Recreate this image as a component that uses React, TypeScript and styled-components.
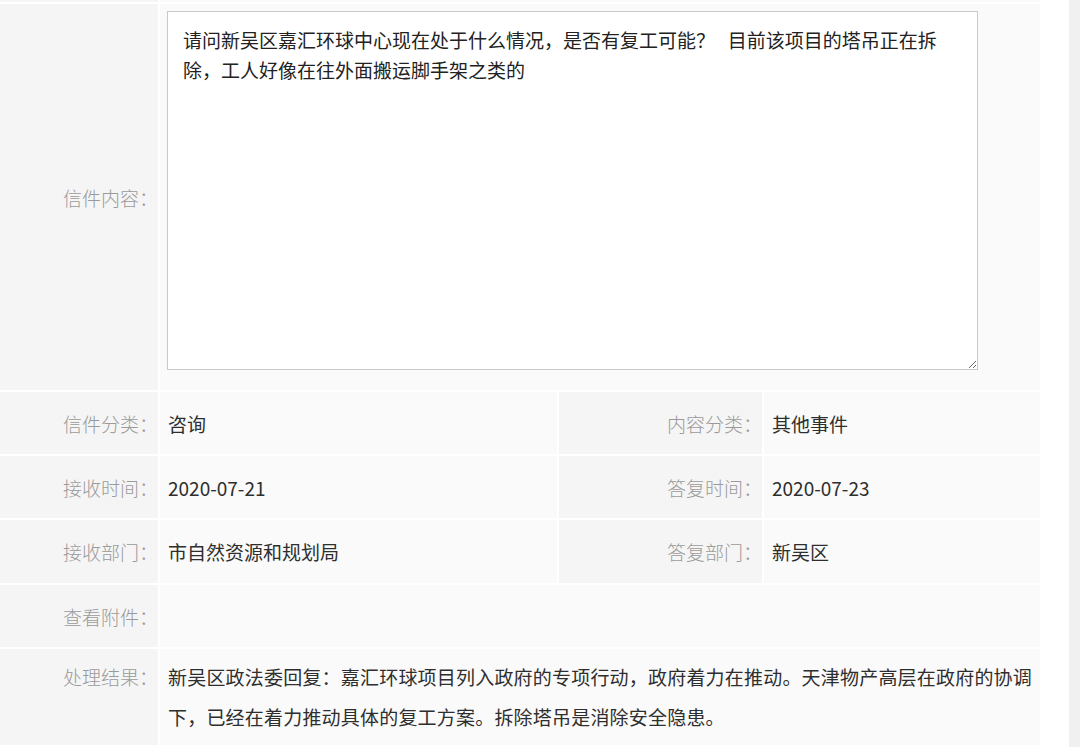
import React from "react";
import styled, { createGlobalStyle } from "styled-components";

const GlobalStyle = createGlobalStyle`
  html, body {
    margin: 0;
    padding: 0;
    background: #ffffff;
    font-family: "Noto Sans CJK SC", "Noto Sans", sans-serif;
  }
`;

type Field = {
  label: string;
  value: string;
};

const letter = {
  content:
    "请问新吴区嘉汇环球中心现在处于什么情况，是否有复工可能？   目前该项目的塔吊正在拆除，工人好像在往外面搬运脚手架之类的",
  pairs: [
    [
      { label: "信件分类：", value: "咨询" },
      { label: "内容分类：", value: "其他事件" },
    ],
    [
      { label: "接收时间：", value: "2020-07-21" },
      { label: "答复时间：", value: "2020-07-23" },
    ],
    [
      { label: "接收部门：", value: "市自然资源和规划局" },
      { label: "答复部门：", value: "新吴区" },
    ],
  ] as Field[][],
  result:
    "新吴区政法委回复：嘉汇环球项目列入政府的专项行动，政府着力在推动。天津物产高层在政府的协调下，已经在着力推动具体的复工方案。拆除塔吊是消除安全隐患。",
};

export default function App() {
  return (
    <>
      <GlobalStyle />
      <Page>
        <Main>
          <DetailGrid>
            {/* tail of the row above, scrolled out of view */}
            <Label />
            <Value $span={3} />

            <Label>信件内容：</Label>
            <Value $span={3} $top $pad="7px 0 0 7px">
              <ContentBox readOnly defaultValue={letter.content} />
            </Value>

            {letter.pairs.map((pair, i) => (
              <React.Fragment key={i}>
                <Label>{pair[0].label}</Label>
                <Value>{pair[0].value}</Value>
                <Label>{pair[1].label}</Label>
                <Value>{pair[1].value}</Value>
              </React.Fragment>
            ))}

            <Label>查看附件：</Label>
            <Value $span={3} />

            <Label $top>处理结果：</Label>
            <Value $span={3} $top $pad="8px 4px 8px 8px">
              <ResultText>{letter.result}</ResultText>
            </Value>
          </DetailGrid>
        </Main>
        <Track />
      </Page>
    </>
  );
}

const Page = styled.div`
  display: flex;
  width: 1080px;
  height: 747px;
  overflow: hidden;
  background: #ffffff;
`;

const Main = styled.div`
  width: 1040px;
  margin-right: 29px;
`;

const Track = styled.div`
  width: 11px;
  background: #f0f0f0;
`;

const DetailGrid = styled.div`
  display: grid;
  grid-template-columns: 158px 397px 203px 276px;
  grid-template-rows: 62px 386px 62px 62px 63px 62px 96px;
  gap: 2px;
  margin-top: -60px;
  background: #ffffff;
`;

const Label = styled.div<{ $top?: boolean }>`
  display: flex;
  justify-content: flex-end;
  align-items: ${(p) => (p.$top ? "flex-start" : "center")};
  padding: ${(p) => (p.$top ? "8px 0 0 0" : "0")};
  line-height: ${(p) => (p.$top ? "40px" : "normal")};
  background: #f5f5f5;
  color: #9a9a9a;
  font-size: 19px;
  font-weight: 300;
  white-space: nowrap;
`;

const Value = styled.div<{ $span?: number; $top?: boolean; $pad?: string }>`
  grid-column: span ${(p) => p.$span || 1};
  display: flex;
  align-items: ${(p) => (p.$top ? "flex-start" : "center")};
  padding: ${(p) => p.$pad || "0 0 0 8px"};
  background: #fafafa;
  color: #2e2e2e;
  font-size: 19px;
`;

const ContentBox = styled.textarea`
  box-sizing: border-box;
  width: 811px;
  height: 359px;
  margin: 0;
  padding: 13px 22px 13px 15px;
  border: 1px solid #c9c9c9;
  background: #ffffff;
  color: #222222;
  font-family: "Noto Sans CJK SC", "Noto Sans", sans-serif;
  font-size: 19px;
  line-height: 30px;
  outline: none;
`;

const ResultText = styled.p`
  margin: 0;
  line-height: 40px;
  letter-spacing: 0.2px;
`;
